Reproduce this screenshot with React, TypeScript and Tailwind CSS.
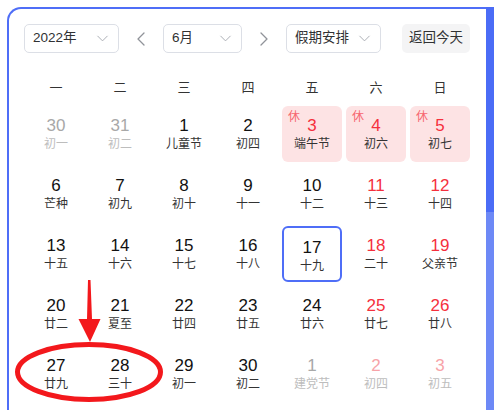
import { ChevronDown, ChevronLeft, ChevronRight } from 'lucide-react';

type Day = {
  d: number;
  lunar: string;
  kind?: 'other' | 'otherRed' | 'red';
  rest?: boolean;
  selected?: boolean;
};

const weeks: Day[][] = [
  [
    { d: 30, lunar: '初一', kind: 'other' },
    { d: 31, lunar: '初二', kind: 'other' },
    { d: 1, lunar: '儿童节' },
    { d: 2, lunar: '初四' },
    { d: 3, lunar: '端午节', rest: true },
    { d: 4, lunar: '初六', rest: true },
    { d: 5, lunar: '初七', rest: true },
  ],
  [
    { d: 6, lunar: '芒种' },
    { d: 7, lunar: '初九' },
    { d: 8, lunar: '初十' },
    { d: 9, lunar: '十一' },
    { d: 10, lunar: '十二' },
    { d: 11, lunar: '十三', kind: 'red' },
    { d: 12, lunar: '十四', kind: 'red' },
  ],
  [
    { d: 13, lunar: '十五' },
    { d: 14, lunar: '十六' },
    { d: 15, lunar: '十七' },
    { d: 16, lunar: '十八' },
    { d: 17, lunar: '十九', selected: true },
    { d: 18, lunar: '二十', kind: 'red' },
    { d: 19, lunar: '父亲节', kind: 'red' },
  ],
  [
    { d: 20, lunar: '廿二' },
    { d: 21, lunar: '夏至' },
    { d: 22, lunar: '廿四' },
    { d: 23, lunar: '廿五' },
    { d: 24, lunar: '廿六' },
    { d: 25, lunar: '廿七', kind: 'red' },
    { d: 26, lunar: '廿八', kind: 'red' },
  ],
  [
    { d: 27, lunar: '廿九' },
    { d: 28, lunar: '三十' },
    { d: 29, lunar: '初一' },
    { d: 30, lunar: '初二' },
    { d: 1, lunar: '建党节', kind: 'other' },
    { d: 2, lunar: '初四', kind: 'otherRed' },
    { d: 3, lunar: '初五', kind: 'otherRed' },
  ],
];

const weekdays = ['一', '二', '三', '四', '五', '六', '日'];

function Select({ label, width }: { label: string; width: string }) {
  return (
    <div
      className={`${width} h-[29px] flex items-center justify-between pl-[8px] pr-[6px] rounded-[5px] border border-[#dcdfe6] text-[13.5px] text-[#303133]`}
    >
      <span>{label}</span>
      <ChevronDown size={19} strokeWidth={1.2} className="text-[#a8abb2]" />
    </div>
  );
}

function Cell({ day }: { day: Day }) {
  let num = 'text-[#111]';
  let sub = 'text-[#333]';
  if (day.kind === 'other') {
    num = 'text-[#a8a8a8]';
    sub = 'text-[#bdbdbd]';
  } else if (day.kind === 'otherRed') {
    num = 'text-[#f7a3a8]';
    sub = 'text-[#bdbdbd]';
  } else if (day.kind === 'red' || day.rest) {
    num = 'text-[#f5303d]';
  }
  return (
    <div
      className={`relative mx-auto w-[60px] h-[56px] pt-[10px] flex flex-col items-center rounded-[6px] ${
        day.rest ? 'bg-[#fde3e4]' : ''
      } ${day.selected ? 'border-2 border-[#4f6ef7] pt-[8px]' : ''}`}
    >
      {day.rest && (
        <span className="absolute top-[4px] left-[6px] text-[12px] leading-[14px] text-[#f7666f]">休</span>
      )}
      <span className={`text-[17px] leading-[20px] ${num}`}>{day.d}</span>
      <span className={`text-[12px] leading-[16px] ${sub}`}>{day.lunar}</span>
    </div>
  );
}

export default function App() {
  return (
    <div
      className="relative w-[494px] h-[410px] overflow-hidden bg-white"
      style={{ fontFamily: '"Liberation Sans", "Noto Sans CJK SC", sans-serif' }}
    >
      <div className="flex h-full pt-[7px] pl-[7px]">
        <div className="flex-1 border-l-2 border-t-2 border-[#4f6ef7] rounded-tl-[14px] pt-[15px] pl-[15px]">
          <div className="flex items-center">
            <Select label="2022年" width="w-[95px]" />
            <div className="w-[44px] flex justify-center text-[#909399]">
              <ChevronLeft size={24} strokeWidth={1.3} />
            </div>
            <Select label="6月" width="w-[79px]" />
            <div className="w-[44px] flex justify-center text-[#909399]">
              <ChevronRight size={24} strokeWidth={1.3} />
            </div>
            <Select label="假期安排" width="w-[95px]" />
            <div className="ml-[21px] w-[68px] h-[29px] flex items-center justify-center rounded-[5px] bg-[#f4f4f5] text-[13.5px] text-[#303133]">
              返回今天
            </div>
          </div>

          <div className="grid grid-cols-[repeat(7,64px)] mt-[25px] h-[20px] items-center text-[13px] text-[#333]">
            {weekdays.map((w) => (
              <div key={w} className="text-center">
                {w}
              </div>
            ))}
          </div>

          <div className="grid grid-cols-[repeat(7,64px)] gap-y-[4px] mt-[8px]">
            {weeks.flat().map((day, i) => (
              <Cell key={i} day={day} />
            ))}
          </div>
        </div>
        <div className="w-[8px] flex flex-col">
          <div className="h-[205px] bg-[#4b6cf6]" />
          <div className="flex-1 bg-[#6d89f6]" />
        </div>
      </div>

      <svg className="absolute inset-0 pointer-events-none" width="494" height="410">
        <polygon points="88,280 90.5,280 92,319 100.5,319 90,342 78.5,319 87,319" fill="#f3181c" />
        <ellipse cx="89" cy="372" rx="71.5" ry="27.5" fill="none" stroke="#f3181c" strokeWidth="5" />
      </svg>
    </div>
  );
}
